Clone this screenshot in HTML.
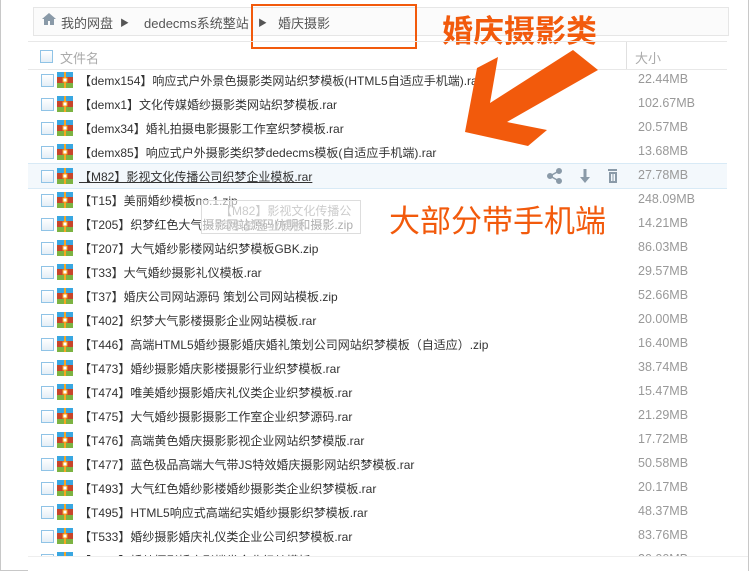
<!DOCTYPE html><html><head><meta charset="utf-8"><style>
body{margin:0;width:750px;height:573px;overflow:hidden;background:#fff;font-family:"Liberation Sans","Noto Sans CJK SC",sans-serif;position:relative}
.outer{position:absolute;left:0;top:0;width:747px;height:570px;border:1px solid #c8c8c8;border-top:none}
.bc{position:absolute;left:33px;top:7px;width:694px;height:27px;border:1px solid #e6e6e6;background:#fbfbfb;font-size:13px;color:#555}
.bc span{position:absolute;top:5px}
.hdr{position:absolute;left:28px;top:41px;width:699px;height:27px;border-top:1px solid #e8e8e8;border-bottom:1px solid #e8e8e8;font-size:13px;color:#aaa}
.cb{position:absolute;width:11px;height:11px;border:1px solid #8fc3e6;background:linear-gradient(#fff,#e4eef6)}
.row{position:absolute;left:28px;width:699px;height:24px;font-size:12px;color:#333}
.row .cb{left:13px;top:6px}
.ic{position:absolute;left:29px;top:4px;width:16px;height:16px}
.row .n{position:absolute;left:51px;top:4px;white-space:nowrap}
.row .s{position:absolute;left:610px;top:4px;color:#999;font-size:12.5px}
.hl{background:#f3f8fc;border-top:1px solid #d8eaf6;border-bottom:1px solid #d8eaf6}
.or{color:#f25a0c;position:absolute}
</style></head><body>
<div class="outer"></div>
<div class="bc"><span style="left:8px;top:4px"><svg width="14" height="13"><path d="M7 1L0 7h2v6h4V9h2v4h4V7h2z" fill="#8a9aa8"/></svg></span><span style="left:27px">我的网盘</span><span style="left:86px;font-size:9px;top:8px">▶</span><span style="left:110px">dedecms系统整站</span><span style="left:224px;font-size:9px;top:8px">▶</span><span style="left:244px">婚庆摄影</span></div>
<div style="position:absolute;left:251px;top:4px;width:162px;height:41px;border:2px solid #f25a0c"></div>
<div class="or" style="left:442px;top:6px;font-size:31px;font-weight:bold">婚庆摄影类</div>
<div class="hdr"><div class="cb" style="left:12px;top:8px"></div><span style="position:absolute;left:32px;top:6px">文件名</span><div style="position:absolute;left:598px;top:0;height:27px;border-left:1px solid #e0e0e0"></div><span style="position:absolute;left:607px;top:6px">大小</span></div>
<div id="rows"></div>
<svg style="position:absolute;left:0;top:0" width="750" height="573"><polygon points="465,132 477,68 498,57 490,103 573,50 598,70 507,122 547,130 528,146" fill="#f25a0c"/></svg>
<div class="or" style="left:389px;top:196px;font-size:31px">大部分带手机端</div>
<div style="position:absolute;left:201px;top:200px;width:160px;height:34px;border:1px solid #ddd;background:rgba(255,255,255,.6);color:#ccc;font-size:12px;padding:3px 0 0 18px;box-sizing:border-box;overflow:hidden;line-height:15px">【M82】影视文化传播公司织梦企业模板</div>
<div style="position:absolute;left:28px;top:556px;width:720px;height:14px;background:#fff;border-top:1px solid #eee"></div>
<script>
var d=[["【demx154】响应式户外景色摄影类网站织梦模板(HTML5自适应手机端).rar","22.44MB"],["【demx1】文化传媒婚纱摄影类网站织梦模板.rar","102.67MB"],["【demx34】婚礼拍摄电影摄影工作室织梦模板.rar","20.57MB"],["【demx85】响应式户外摄影类织梦dedecms模板(自适应手机端).rar","13.68MB"],["【M82】影视文化传播公司织梦企业模板.rar","27.78MB"],["【T15】美丽婚纱模板no.1.zip","248.09MB"],["【T205】织梦红色大气摄影网站源码仿明和摄影.zip","14.21MB"],["【T207】大气婚纱影楼网站织梦模板GBK.zip","86.03MB"],["【T33】大气婚纱摄影礼仪模板.rar","29.57MB"],["【T37】婚庆公司网站源码 策划公司网站模板.zip","52.66MB"],["【T402】织梦大气影楼摄影企业网站模板.rar","20.00MB"],["【T446】高端HTML5婚纱摄影婚庆婚礼策划公司网站织梦模板（自适应）.zip","16.40MB"],["【T473】婚纱摄影婚庆影楼摄影行业织梦模板.rar","38.74MB"],["【T474】唯美婚纱摄影婚庆礼仪类企业织梦模板.rar","15.47MB"],["【T475】大气婚纱摄影摄影工作室企业织梦源码.rar","21.29MB"],["【T476】高端黄色婚庆摄影影视企业网站织梦模版.rar","17.72MB"],["【T477】蓝色极品高端大气带JS特效婚庆摄影网站织梦模板.rar","50.58MB"],["【T493】大气红色婚纱影楼婚纱摄影类企业织梦模板.rar","20.17MB"],["【T495】HTML5响应式高端纪实婚纱摄影织梦模板.rar","48.37MB"],["【T533】婚纱摄影婚庆礼仪类企业公司织梦模板.rar","83.76MB"],["【T534】婚纱摄影婚庆影楼类企业织梦模板.rar","20.00MB"]];
var ic='<svg class="ic" viewBox="0 0 16 16"><rect x="0" y="0" width="16" height="5" fill="#3aa7e0"/><rect x="0" y="5" width="16" height="6" fill="#c8452a"/><rect x="0" y="11" width="16" height="5" fill="#7cb342"/><rect x="7" y="0" width="2" height="16" fill="#f5a623"/><rect x="6" y="6" width="4" height="4" fill="#fff" stroke="#f5a623"/></svg>';
var tools='<svg style="position:absolute;left:519px;top:4px" width="70" height="16"><g fill="#8a9aa8" stroke="#8a9aa8"><circle cx="12" cy="3" r="2.5"/><circle cx="3" cy="8" r="2.5"/><circle cx="12" cy="13" r="2.5"/><path d="M12 3L3 8L12 13" fill="none" stroke-width="1.5"/><path d="M38 1v10" stroke-width="3" fill="none"/><path d="M33 9h10l-5 6z" stroke="none"/><rect x="61" y="1" width="10" height="2" stroke="none"/><rect x="62" y="4" width="8" height="11" stroke="none"/></g><g stroke="#f3f8fc" stroke-width="1"><path d="M64.5 6v7M66 6v7M67.5 6v7"/></g></svg>';
var h='';d.forEach(function(r,i){var y=68+i*24;var hl=i==4;h+='<div class="row'+(hl?' hl':'')+'" style="top:'+(hl?y-1:y)+'px"><div class="cb"></div>'+ic+'<span class="n"'+(hl?' style="text-decoration:underline"':'')+'>'+r[0]+'</span>'+(hl?tools:'')+'<span class="s">'+r[1]+'</span></div>';});
document.getElementById('rows').innerHTML=h;
</script>
</body></html>
